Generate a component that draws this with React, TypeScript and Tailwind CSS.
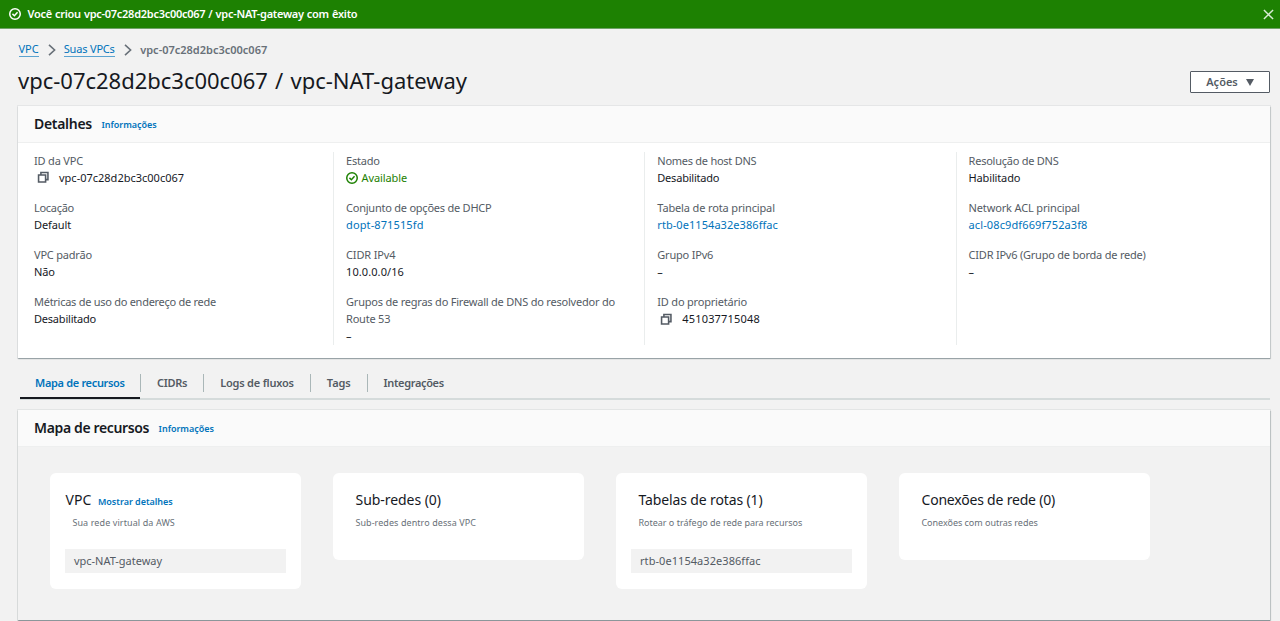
import type { ReactNode } from "react";

function CheckCircle({ className }: { className: string }) {
  return (
    <svg viewBox="0 0 16 16" fill="none" stroke="currentColor" strokeWidth="2" className={className}>
      <circle cx="8" cy="8" r="7" />
      <path d="M4.6 7.9 7.2 10.3 11.4 5.8" />
    </svg>
  );
}

function CopyIcon() {
  return (
    <svg viewBox="0 0 16 16" fill="none" stroke="currentColor" strokeWidth="2" className="ml-[3px] mr-[9.5px] size-[12.5px] shrink-0 text-[#545b64]">
      <path d="M2 5h9v9H2z" />
      <path d="M5 5V2h9v9h-3" />
    </svg>
  );
}

function Chevron() {
  return (
    <svg viewBox="0 0 8 12" fill="none" stroke="#687078" strokeWidth="1.6" className="h-3 w-2">
      <path d="M1 .8 6.6 6 1 11.2" />
    </svg>
  );
}

function Field({ label, track, children }: { label: ReactNode; track: string; children: ReactNode }) {
  return (
    <div className="mb-[12.5px] last:mb-0">
      <div className={`whitespace-nowrap text-[#545b64] ${track}`}>{label}</div>
      <div className="flex h-[17.3px] items-center whitespace-nowrap">{children}</div>
    </div>
  );
}

function Column({ children, first }: { children: ReactNode; first?: boolean }) {
  return (
    <div className={first ? "w-[299px] shrink-0 pr-3" : "w-[311.3px] shrink-0 border-l border-[#eaeded] pl-3"}>{children}</div>
  );
}

function Tab({ children, track, last }: { children: ReactNode; track: string; last?: boolean }) {
  return (
    <div className={`flex h-[18px] items-center px-4 ${track} ${last ? "" : "border-r border-[#aab7b8]"}`}>{children}</div>
  );
}

function PanelHeader({ title, track }: { title: string; track: string }) {
  return (
    <header className="flex h-[37px] items-center gap-[9.5px] border-b border-[#eeefef] bg-[#fafafa] px-4 pb-px">
      <h2 className={`text-[14px] font-semibold text-[#16191f] ${track}`}>{title}</h2>
      <a className="pt-[3px] text-[9px] font-semibold tracking-[-0.02px] text-[#0073bb]">Informações</a>
    </header>
  );
}

function Card({ title, track, action, desc, descTrack, item, itemTrack }: {
  title: string; track: string; action?: string; desc: string; descTrack: string; item?: string; itemTrack?: string;
}) {
  return (
    <section className={`w-[251px] rounded-[6px] bg-white px-[15px] pt-[17px] ${item ? "h-[116px]" : "h-[87px]"}`}>
      <div className={`flex h-5 items-center gap-[6.5px] ${action ? "pl-[0.5px]" : "pl-[7.5px]"}`}>
        <h3 className={`text-[14px] text-[#16191f] ${track}`}>{title}</h3>
        {action && <a className="pt-[3px] text-[9px] font-semibold tracking-[-0.02px] text-[#0073bb]">{action}</a>}
      </div>
      <p className={`mt-[5px] pl-[7.4px] text-[9px] leading-4 text-[#687078] ${descTrack}`}>{desc}</p>
      {item && (
        <div className={`mt-[18px] flex h-6 items-center bg-[#f2f2f2] pl-[9px] text-[#545b64] ${itemTrack}`}>{item}</div>
      )}
    </section>
  );
}

export default function App() {
  return (
    <div className="h-[621px] overflow-hidden bg-[#f2f2f2] font-['Noto_Sans','Open_Sans',sans-serif] text-[11px] leading-[17.3px] text-[#16191f]">
      <div className="flex h-[29px] items-center border-b border-[#6fa268] bg-[#1d8102] pl-[9px] pr-[6px] text-white">
        <CheckCircle className="size-3" />
        <span className="ml-[6.5px] flex-1 text-[11px] font-semibold tracking-[-0.27px] [word-spacing:0.5px]">
          Você criou vpc-07c28d2bc3c00c067 / vpc-NAT-gateway com êxito
        </span>
        <svg viewBox="0 0 12 12" stroke="#d9ecd5" strokeWidth="1.6" className="size-[11px]">
          <path d="M1 1 11 11M11 1 1 11" />
        </svg>
      </div>

      <div className="pl-[18px] pr-[10px]">
        <nav className="flex h-10 items-center pl-[0.5px] pt-px">
          <a className="border-b border-[#5ba3d0] leading-[14px] text-[#0073bb]">VPC</a>
          <span className="ml-[9px] mr-[8px]"><Chevron /></span>
          <a className="border-b border-[#5ba3d0] leading-[14px] tracking-[-0.18px] text-[#0073bb]">Suas VPCs</a>
          <span className="ml-[9px] mr-[8.5px]"><Chevron /></span>
          <span className="font-semibold text-[#687078]">vpc-07c28d2bc3c00c067</span>
        </nav>
        <div className="flex h-[37px] items-start justify-between">
          <h1 className="-mt-px text-[22px] leading-[25px] tracking-[-0.01px] [word-spacing:1.5px]">vpc-07c28d2bc3c00c067 / vpc-NAT-gateway</h1>
          <button className="mt-[2px] flex h-[22px] w-20 items-center justify-center gap-2 rounded-[1px] border border-[#545b64] bg-white font-semibold text-[#545b64]">
            <span>Ações</span>
            <svg viewBox="0 0 8 7" fill="currentColor" className="h-[7px] w-2"><path d="M0 0h8L4 7z" /></svg>
          </button>
        </div>

        <section className="h-[252px] w-[1252px] bg-white shadow-[0_1px_1px_0_rgba(0,28,36,.25),0_0_0_1px_rgba(0,28,36,.05),1px_1px_1px_0_rgba(0,28,36,.1)]">
          <PanelHeader title="Detalhes" track="tracking-[-0.3px]" />
          <div className="flex px-4 pt-[8.6px]">
            <Column first>
              <Field label="ID da VPC" track="tracking-[-0.18px]"><CopyIcon /><span>vpc-07c28d2bc3c00c067</span></Field>
              <Field label="Locação" track="tracking-[-0.3px]"><span className="tracking-[-0.11px]">Default</span></Field>
              <Field label="VPC padrão" track="tracking-[-0.2px]"><span className="tracking-[-0.2px]">Não</span></Field>
              <Field label="Métricas de uso do endereço de rede" track="tracking-[-0.27px]"><span className="tracking-[-0.21px]">Desabilitado</span></Field>
            </Column>
            <Column>
              <Field label="Estado" track="tracking-[-0.2px]">
                <span className="flex items-center gap-[3.5px] tracking-[-0.1px] text-[#1d8102]"><CheckCircle className="size-3" />Available</span>
              </Field>
              <Field label="Conjunto de opções de DHCP" track="tracking-[-0.23px]"><a className="tracking-[0.12px] text-[#0073bb]">dopt-871515fd</a></Field>
              <Field label="CIDR IPv4" track="tracking-[-0.15px]"><span className="tracking-[0.09px]">10.0.0.0/16</span></Field>
              <Field label={<>Grupos de regras do Firewall de DNS do resolvedor do<br />Route 53</>} track="tracking-[-0.21px]">–</Field>
            </Column>
            <Column>
              <Field label="Nomes de host DNS" track="tracking-[-0.26px]"><span className="tracking-[-0.21px]">Desabilitado</span></Field>
              <Field label="Tabela de rota principal" track="tracking-[-0.14px]"><a className="tracking-[0.06px] text-[#0073bb]">rtb-0e1154a32e386ffac</a></Field>
              <Field label="Grupo IPv6" track="tracking-[-0.2px]">–</Field>
              <Field label="ID do proprietário" track="tracking-[-0.2px]"><CopyIcon /><span className="tracking-[0.17px]">451037715048</span></Field>
            </Column>
            <Column>
              <Field label="Resolução de DNS" track="tracking-[-0.25px]"><span className="tracking-[-0.15px]">Habilitado</span></Field>
              <Field label="Network ACL principal" track="tracking-[-0.15px]"><a className="tracking-[0.11px] text-[#0073bb]">acl-08c9df669f752a3f8</a></Field>
              <Field label="CIDR IPv6 (Grupo de borda de rede)" track="tracking-[-0.22px]">–</Field>
            </Column>
          </div>
        </section>

        <div className="ml-[2px] mt-[9px] flex h-[33px] items-start border-b-2 border-[#d5dbdb] font-semibold text-[#545b64]">
          <div className="flex h-[32px] w-[120px] items-start border-b-2 border-[#16191f] text-[#0073bb]">
            <div className="mt-[7px] flex h-[18px] items-center pl-[15px] tracking-[-0.33px]">Mapa de recursos</div>
          </div>
          <div className="mt-[7px] flex border-l border-[#aab7b8]">
            <Tab track="tracking-[-0.3px]">CIDRs</Tab>
            <Tab track="tracking-[-0.2px]">Logs de fluxos</Tab>
            <Tab track="tracking-[-0.1px]">Tags</Tab>
            <Tab track="tracking-[-0.35px]" last>Integrações</Tab>
          </div>
        </div>

        <section className="mt-[10px] h-[210px] w-[1252px] shadow-[0_1px_1px_0_rgba(0,28,36,.3),0_0_0_1px_rgba(0,28,36,.06),1px_1px_1px_0_rgba(0,28,36,.12)]">
          <PanelHeader title="Mapa de recursos" track="tracking-[-0.36px]" />
          <div className="flex items-start gap-8 pl-8 pt-[26px]">
            <Card title="VPC" track="tracking-[0.09px]" action="Mostrar detalhes" desc="Sua rede virtual da AWS" descTrack="tracking-[0.1px]" item="vpc-NAT-gateway" itemTrack="tracking-[-0.02px]" />
            <Card title="Sub-redes (0)" track="tracking-[-0.05px]" desc="Sub-redes dentro dessa VPC" descTrack="tracking-[0.07px]" />
            <Card title="Tabelas de rotas (1)" track="tracking-[-0.13px]" desc="Rotear o tráfego de rede para recursos" descTrack="tracking-[0px]" item="rtb-0e1154a32e386ffac" itemTrack="tracking-[0.06px]" />
            <Card title="Conexões de rede (0)" track="tracking-[-0.2px]" desc="Conexões com outras redes" descTrack="tracking-[-0.02px]" />
          </div>
        </section>
      </div>
    </div>
  );
}
